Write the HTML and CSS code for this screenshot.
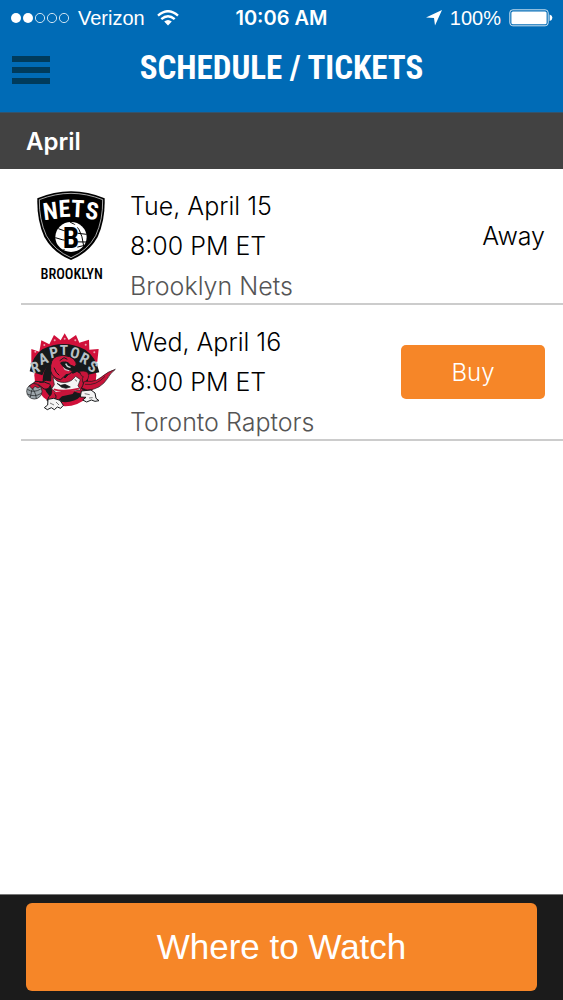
FILE: index.html
```
<!DOCTYPE html>
<html lang="en">
<head>
<meta charset="utf-8">
<meta name="viewport" content="width=device-width, initial-scale=1">
<title>Schedule / Tickets</title>
<link rel="stylesheet" href="styles.css">
</head>

<body>
<div class="app">
  <header class="top">
    <div class="status">
      <div class="status_left">
        <svg class="signal" width="60" height="12" viewBox="0 0 60 12">
          <g fill="#fff"><circle cx="6" cy="6" r="5"/><circle cx="18" cy="6" r="5"/></g>
          <g fill="none" stroke="#fff" stroke-width=".8"><circle cx="30" cy="6" r="4.6"/><circle cx="42" cy="6" r="4.6"/><circle cx="54" cy="6" r="4.6"/></g>
        </svg>
        <span>Verizon</span>
        <svg class="wifi" width="22" height="16" viewBox="0 0 22 16">
          <g fill="none" stroke="#fff" stroke-width="2.4"><path d="M1 5.6Q11-3.2 21 5.6"/><path d="M4.3 9.2Q11 3.4 17.7 9.2"/></g>
          <path d="M7.2 11.6Q11 8.4 14.8 11.6L11 15.6Z" fill="#fff"/>
        </svg>
      </div>
      <div class="status_time">10:06 AM</div>
      <div class="status_right">
        <svg width="16" height="16" viewBox="0 0 16 16"><path d="M0 7.6L16 0L9 15.6L8 8Z" fill="#fff"/></svg>
        <span>100%</span>
        <svg width="44" height="18" viewBox="0 0 44 18">
          <rect x=".8" y=".8" width="38.4" height="16" rx="3" fill="none" stroke="#fff" stroke-opacity=".8"/>
          <rect x="2.4" y="2.4" width="35.2" height="12.8" rx="1.5" fill="#fff"/>
          <path d="M40.6 5.6Q43.4 6.4 43.4 8.8T40.6 12Z" fill="#fff"/>
        </svg>
      </div>
    </div>
    <div class="nav">
      <button class="menu" type="button" aria-label="Menu"><i></i><i></i><i></i></button>
      <h1>SCHEDULE / TICKETS</h1>
    </div>
  </header>

  <main class="content">
    <h2 class="month">April</h2>
    <ul class="games">
      <li>
        <div class="logo">
          <svg width="68" height="92" viewBox="51 27 204 276" role="img" aria-label="Brooklyn Nets">
            <path d="M52 52Q102 31 153 31T254 52Q256 118 233 168Q206 216 153 237Q100 216 73 168Q50 118 52 52Z" fill="#000"/>
            <path d="M58 56Q106 37 153 37T248 56Q249 116 227 164Q202 209 153 230Q104 209 79 164Q57 116 58 56Z" fill="none" stroke="#fff" stroke-width="2"/>
            <g class="nets_name"><text x="94" y="115" transform="rotate(-7 94 115)">N</text><text x="135" y="108" transform="rotate(-3 135 108)">E</text><text x="172" y="108" transform="rotate(3 172 108)">T</text><text x="213" y="115" transform="rotate(9 213 115)">S</text></g>
            <ellipse cx="153" cy="168" rx="47" ry="45" fill="#fff"/>
            <g fill="none" stroke="#000" stroke-width="3"><path d="M115 143Q140 154 200 160M106 170Q145 184 199 183M125 208Q160 202 190 194M150 123Q184 133 191 195"/></g>
            <rect x="134" y="131" width="38" height="77" fill="#fff"/>
            <text class="nets_b" x="153" y="202">B</text>
            <text class="nets_city" x="155" y="294">BROOKLYN</text>
          </svg>
        </div>
        <div class="info">
          <p>Tue, April 15</p>
          <p>8:00 PM ET</p>
          <p class="team">Brooklyn Nets</p>
        </div>
        <span class="away">Away</span>
      </li>
      <li>
        <div class="logo">
          <svg width="90" height="78" viewBox="18 36 270 234" role="img" aria-label="Toronto Raptors">
            <!-- spikes and ball behind -->
            <path d="M34 128L34 84L58 92L64 58L88 70L102 42L122 58L134 37L146 57L168 42L178 65L207 56L208 86L236 84L232 122Z" fill="#d0103a"/>
            <circle cx="136" cy="163" r="93" fill="#d0103a"/>
            <path d="M29 151Q36 107 67 85Q132 52 196 86Q229 109 238 154L201 162Q182 119 132 116Q83 118 67 163Z" fill="#17191b"/>
            <g fill="#e9a4b0"><circle cx="46" cy="92" r="3"/><circle cx="73" cy="72" r="3"/><circle cx="104" cy="58" r="3"/><circle cx="134" cy="53" r="3"/><circle cx="166" cy="58" r="3"/><circle cx="197" cy="71" r="3"/><circle cx="223" cy="94" r="3"/></g>
            <circle cx="136" cy="176" r="68" fill="#17191b"/>
            <g class="raptors_name"><text x="50" y="154" transform="rotate(-18 50 154)">R</text><text x="75" y="128" transform="rotate(-20 75 128)">A</text><text x="105" y="110" transform="rotate(-12 105 110)">P</text><text x="132" y="104">T</text><text x="161" y="111" transform="rotate(14 161 111)">O</text><text x="187" y="127" transform="rotate(26 187 127)">R</text><text x="210" y="150" transform="rotate(34 210 150)">S</text></g>
            <!-- tail -->
            <path d="M181 176Q217 190 243 169Q264 151 286 145Q269 159 263 172Q241 206 203 207L174 198Z" fill="#c8143a" stroke="#17191b" stroke-width="2"/>
            <path d="M195 190Q229 195 255 166" fill="none" stroke="#17191b" stroke-width="2"/>
            <!-- body and legs -->
            <path d="M97 137Q91 162 92 180Q78 174 66 183L48 181Q34 186 42 195L57 192L72 204Q86 207 91 193Q101 218 87 227L81 239L104 246L130 215Q154 207 164 214L198 224L199 213L184 202Q194 187 191 163L171 151Q159 160 151 154L135 171Z" fill="#c8143a" stroke="#17191b" stroke-width="3"/>
            <path d="M92 150Q89 113 111 106Q128 99 149 107Q164 112 168 125Q172 133 163 137Q150 134 145 126Q138 120 130 126Q134 138 149 145L158 149Q151 163 138 161Q131 168 122 176Q98 172 92 150Z" fill="#d31840" stroke="#17191b" stroke-width="3"/>
            <path d="M119 119L132 110L142 115M102 140Q108 157 118 163" fill="none" stroke="#17191b" stroke-width="3"/>
            <!-- open mouth -->
            <path d="M120 126Q130 118 143 125Q150 134 165 138L157 149Q135 150 120 126Z" fill="#17191b"/>
            <path d="M135 129L139 127L144 134L153 138L150 141L141 138ZM128 137L138 145L149 148L146 151L134 147Z" fill="#c9ced1"/>
            <!-- jersey -->
            <path d="M99 169L111 180Q135 190 155 178L167 166L181 176L174 194L182 207Q151 214 128 210L111 217L95 204L103 191Z" fill="#f4f4f4" stroke="#17191b" stroke-width="2"/>
            <path d="M111 187L122 193L135 190L151 198L138 202L125 199ZM164 175L171 181" fill="#17191b" stroke="#17191b" stroke-width="2"/>
            <path d="M101 205Q130 214 177 203" fill="none" stroke="#c8143a" stroke-width="5"/>
            <path d="M112 212L165 208L158 219L126 226L104 246L86 238Q102 226 101 214Z" fill="#c8143a"/>
            <!-- arms -->
            <path d="M178 151Q206 147 206 164Q205 181 188 184L187 172Q194 166 184 164Z" fill="#c8143a" stroke="#17191b" stroke-width="2"/>
            <path d="M58 184Q73 180 91 190M103 218Q112 224 105 237" fill="none" stroke="#17191b" stroke-width="3"/>
            <!-- feet -->
            <path d="M84 235L101 232L120 238L130 253L122 262L112 258L103 266L94 260L82 266L73 260L83 252Z" fill="#f4f4f4" stroke="#17191b" stroke-width="3"/>
            <path d="M184 210L213 207L225 216L228 232L237 239L225 241L214 237L200 243L188 237L198 229L181 228Z" fill="#f4f4f4" stroke="#17191b" stroke-width="3"/>
            <path d="M90 246L102 252M108 243L117 252M194 218L209 221M207 231L218 230" stroke="#777" stroke-width="3"/>
            <!-- basketball -->
            <circle cx="43" cy="211" r="23" fill="#9da6ab" stroke="#17191b" stroke-width="2"/>
            <path d="M22 205Q41 218 64 203M29 193Q47 209 49 233M48 189Q31 207 31 229M22 219Q43 230 64 217" fill="none" stroke="#17191b" stroke-width="2"/>
            <path d="M28 195L39 187L50 190L61 197L54 201L45 196L37 204Z" fill="#c8143a" stroke="#17191b" stroke-width="2"/>
          </svg>
        </div>
        <div class="info">
          <p>Wed, April 16</p>
          <p>8:00 PM ET</p>
          <p class="team">Toronto Raptors</p>
        </div>
        <button class="buy" type="button">Buy</button>
      </li>
    </ul>
  </main>

  <footer class="bottom">
    <button class="watch" type="button">Where to Watch</button>
  </footer>
</div>
</body>
</html>
```
FILE: styles.css
```
*{margin:0;padding:0;box-sizing:border-box;}
li{list-style:none;}
svg{display:block;}
button{border:0;cursor:pointer;font-family:inherit;}
body{background:#fff;color:#000;font-family:Inter,"Liberation Sans",Arial,sans-serif;}
.app{min-height:100vh;display:flex;flex-direction:column;}

.top{background:#006bb6;color:#fff;border-bottom:1px solid #34536b;}
.status{display:grid;grid-template-columns:1fr auto 1fr;align-items:center;height:36px;padding:0 10px;font:20px/36px "Liberation Sans",Arial,sans-serif;}
.status_left,.status_right{display:flex;align-items:center;gap:8px;}
.status_left .wifi{margin-left:4px;}
.status_right{justify-content:flex-end;}
.status_time{font-family:Inter,sans-serif;font-weight:600;}
.nav{display:grid;grid-template-columns:38px 1fr 38px;align-items:start;height:76px;padding:12px 12px 0;}
.menu{background:none;display:grid;gap:5px;padding-top:8px;}
.menu i{height:6px;background:#003b5c;}
.nav h1{text-align:center;white-space:nowrap;font:bold 33px/40px "Roboto Condensed","Liberation Sans Narrow","Liberation Sans",sans-serif;}

.content{flex:1;}
.month{height:56px;padding:0 26px;background:#424242;color:#fff;font-size:24px;font-weight:600;line-height:58px;}
.games li{display:flex;align-items:center;margin-left:21px;padding:0 18px 0 5px;border-bottom:2px solid #ccc;font-size:25px;font-weight:300;line-height:32px;}
.logo{width:90px;display:flex;justify-content:center;}
.info{flex:1;display:grid;gap:8px;padding:21px 14px 1px;}
.team{color:#555;}
.buy{width:144px;height:54px;border-radius:5px;background:#f68628;color:#fff;font-size:24px;font-weight:300;}

.nets_name{font:bold 72px "Roboto Condensed","Liberation Sans",sans-serif;fill:#fff;text-anchor:middle;}
.nets_b{font:bold 88px "Roboto Condensed","Liberation Sans",sans-serif;text-anchor:middle;}
.nets_city{font:500 43px "Roboto Condensed","Liberation Sans",sans-serif;text-anchor:middle;}
.raptors_name{font:bold 46px "Roboto Condensed","Liberation Sans",sans-serif;fill:#b7c0c5;text-anchor:middle;}

.bottom{padding:8px 26px 9px;background:#1b1b1b;border-top:1px solid #777;}
.watch{display:block;width:100%;height:88px;border-radius:6px;background:#f68628;color:#fff;font-family:"Liberation Sans",Arial,sans-serif;font-size:35px;}
```
